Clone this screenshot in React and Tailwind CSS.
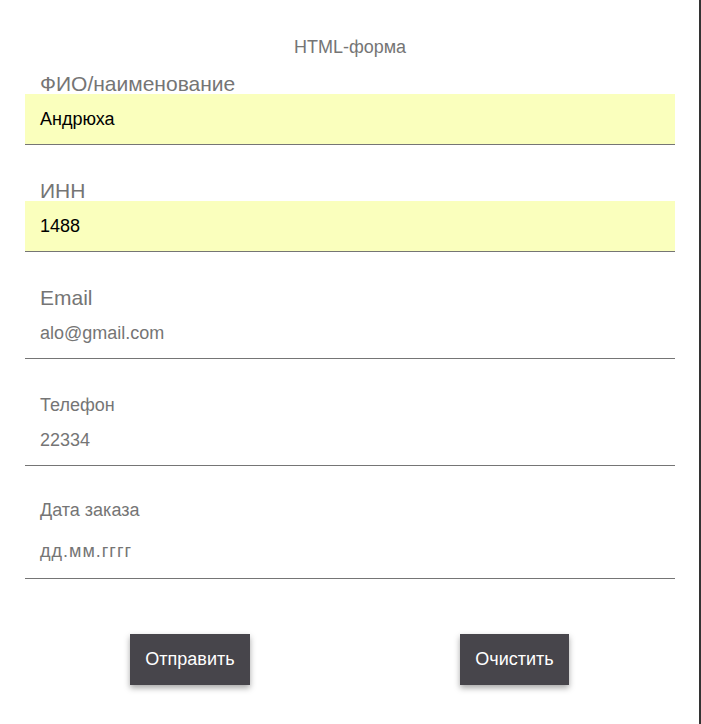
const fields = [
  { label: 'ФИО/наименование', value: 'Андрюха', filled: true, big: true, mt: 'mt-[15px]' },
  { label: 'ИНН', value: '1488', filled: true, big: true, mt: 'mt-[36px]' },
  { label: 'Email', value: 'alo@gmail.com', filled: false, big: true, mt: 'mt-[36px]' },
  { label: 'Телефон', value: '22334', filled: false, big: false, mt: 'mt-[36px]' },
];

const Field = ({ label, value, filled, big, mt }) => (
  <div className={mt}>
    <label className={`block h-5 leading-5 pl-[15px] text-[#757575] ${big ? 'text-[21px]' : 'text-[18px]'}`}>
      {label}
    </label>
    <div
      className={`flex items-center h-[51px] pl-[15px] text-[18px] border-b border-[#757575] ${
        filled ? 'bg-[#faffbd] text-black' : 'text-[#757575]'
      }`}
    >
      {value}
    </div>
  </div>
);

const App = () => {
  return (
    <div className="w-[701px] h-[724px] bg-white border-r-2 border-[#333] font-['Liberation_Sans',Arial,sans-serif]">
      <div className="w-[650px] ml-[25px]">
        <h1 className="pt-[38px] h-[59px] text-center text-[18px] leading-[18px] text-[#757575]">
          HTML-форма
        </h1>
        {fields.map((f) => (
          <Field key={f.label} {...f} />
        ))}
        <div className="mt-[34px]">
          <label className="block h-5 leading-5 pl-[15px] text-[18px] text-[#757575]">
            Дата заказа
          </label>
          <div className="flex items-center pt-[4px] h-[59px] pl-[15px] text-[18px] tracking-[1px] text-[#757575] border-b border-[#757575]">
            дд.мм.гггг
          </div>
        </div>
        <div className="flex justify-around mt-[55px] pr-[1px]">
          <button className="h-[51px] px-[15px] bg-[#47454b] text-white text-[18px] shadow-[0_3px_6px_rgba(0,0,0,0.35)]">
            Отправить
          </button>
          <button className="h-[51px] px-[15px] bg-[#47454b] text-white text-[18px] shadow-[0_3px_6px_rgba(0,0,0,0.35)]">
            Очистить
          </button>
        </div>
      </div>
    </div>
  );
};

export default App;
